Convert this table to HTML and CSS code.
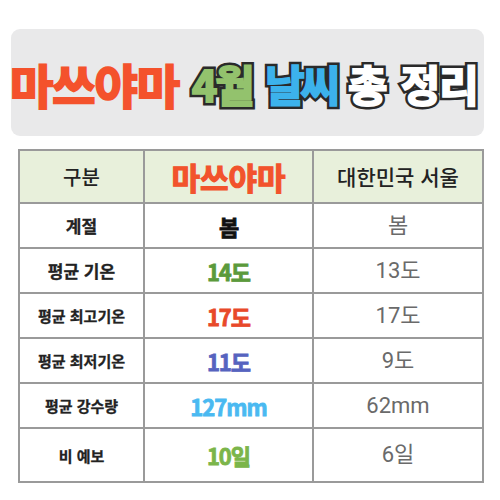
FILE: index.html
```html
<!DOCTYPE html>
<html lang="ko">
<head>
<meta charset="utf-8">
<link rel="stylesheet" href="styles.css">
</head>
<body>
<div class="page">
  <div class="banner">
    <span class="t t-red">마쓰야마</span>
    <span class="t t-outline t-green" data-text="4월">4월</span>
    <span class="t t-outline t-blue" data-text="날씨">날씨</span>
    <span class="t t-outline t-white" data-text="총 정리">총 정리</span>
  </div>
  <table class="weather">
    <colgroup>
      <col class="c1"><col class="c2"><col class="c3">
    </colgroup>
    <tr class="head">
      <td class="label-h">구분</td>
      <td class="city-h">마쓰야마</td>
      <td class="seoul-h">대한민국 서울</td>
    </tr>
    <tr>
      <td class="label label-lg">계절</td>
      <td class="val v-black">봄</td>
      <td class="cmp">봄</td>
    </tr>
    <tr>
      <td class="label label-lg">평균 기온</td>
      <td class="val v-green">14도</td>
      <td class="cmp">13도</td>
    </tr>
    <tr>
      <td class="label">평균 최고기온</td>
      <td class="val v-red">17도</td>
      <td class="cmp">17도</td>
    </tr>
    <tr>
      <td class="label">평균 최저기온</td>
      <td class="val v-indigo">11도</td>
      <td class="cmp">9도</td>
    </tr>
    <tr>
      <td class="label">평균 강수량</td>
      <td class="val v-sky">127mm</td>
      <td class="cmp">62mm</td>
    </tr>
    <tr class="last">
      <td class="label">비 예보</td>
      <td class="val v-lime">10일</td>
      <td class="cmp">6일</td>
    </tr>
  </table>
</div>
</body>
</html>
```
FILE: styles.css
```css
html, body {
  margin: 0;
  padding: 0;
  background: #ffffff;
}
body {
  font-family: "Noto Sans CJK KR", "Noto Sans", sans-serif;
  width: 500px;
  height: 500px;
  overflow: hidden;
}
.page {
  padding-top: 29px;
}
.banner {
  margin-left: 11px;
  width: 473px;
  height: 107px;
  background: #e9e9ea;
  border-radius: 9px;
  display: flex;
  align-items: center;
  box-sizing: border-box;
}
.t {
  font-weight: 700;
  line-height: 1;
  display: inline-block;
  white-space: nowrap;
  margin-top: 2px;
}
.t-red {
  font-size: 47px;
  color: #f4522c;
  -webkit-text-stroke: 2.2px #f4522c;
  letter-spacing: -1px;
  margin-left: -1px;
  margin-right: 13px;
}
.t-outline {
  position: relative;
  z-index: 0;
  font-size: 43px;
  -webkit-text-stroke: 2px currentColor;
}
.t-outline::before {
  content: attr(data-text);
  position: absolute;
  left: 0;
  top: 0;
  z-index: -1;
  color: #2a2a2a;
  -webkit-text-stroke: 7px #2a2a2a;
}
.t-outline, .t-outline::before {
  letter-spacing: -2px;
}
.t-green { color: #93c26d; margin-right: 12px; }
.t-blue { color: #3cb2ec; margin-right: 12px; }
.t-blue, .t-blue::before { letter-spacing: -4px; }
.t-white { color: #ffffff; }
.t-white, .t-white::before { letter-spacing: -1px; word-spacing: 3px; }

.weather {
  margin-top: 13px;
  margin-left: 18px;
  width: 464px;
  border-collapse: collapse;
  table-layout: fixed;
}
.c1 { width: 125px; }
.c2 { width: 169px; }
.c3 { width: 170px; }
.weather td {
  border: 2px solid #9a9a9a;
  text-align: center;
  vertical-align: middle;
  padding: 0;
  height: 43px;
  line-height: 1;
}
.weather tr.head td {
  background: #e8f0db;
  height: 51px;
}
.weather tr.last td {
  height: 52px;
}
.label-h {
  font-size: 20px;
  font-weight: 500;
  color: #222;
}
.city-h {
  font-size: 31px;
  font-weight: 700;
  color: #f2532c;
  -webkit-text-stroke: 1.2px #f2532c;
  letter-spacing: 0;
}
.seoul-h {
  font-size: 21px;
  font-weight: 500;
  color: #222;
}
.label {
  font-size: 15px;
  font-weight: 700;
  color: #222;
  -webkit-text-stroke: 0.3px #222;
}
.label-lg {
  font-size: 17px;
}
.val {
  font-size: 22px;
  font-weight: 700;
  letter-spacing: -1px;
  -webkit-text-stroke: 0.8px currentColor;
}
.v-black { color: #111; }
.v-green { color: #5b9a3c; }
.v-red { color: #e8492a; }
.v-indigo { color: #5663bf; }
.v-sky { color: #4ab9f1; }
.v-lime { color: #7bb54a; }
.cmp {
  font-family: Roboto, "Noto Sans CJK KR", sans-serif;
  font-size: 22px;
  font-weight: 400;
  color: #6a6a6a;
}
```
